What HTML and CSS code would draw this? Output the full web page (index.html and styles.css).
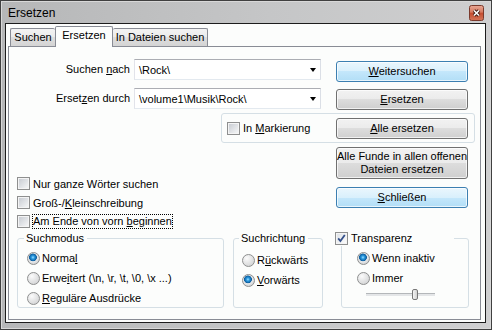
FILE: index.html
```html
<!DOCTYPE html>
<html lang="de">
<head>
    <meta charset="UTF-8">
    <meta name="viewport" content="width=device-width, initial-scale=1.0">
    <title>Ersetzen</title>
    <link rel="stylesheet" href="styles.css">
</head>
<body>
    <div class="window">
        <div class="titlebar">
            <span class="title">Ersetzen</span>
            <span class="close-btn">
                <svg width="15" height="16" viewBox="0 0 15 16">
                    <defs>
                        <linearGradient id="closeGrad" x1="0" y1="0" x2="0" y2="1">
                            <stop offset="0" stop-color="#e9a795"/>
                            <stop offset="0.45" stop-color="#d67a60"/>
                            <stop offset="0.5" stop-color="#c54b2f"/>
                            <stop offset="1" stop-color="#d3775a"/>
                        </linearGradient>
                    </defs>
                    <rect x="0.5" y="0.5" width="14" height="15" rx="2" fill="url(#closeGrad)" stroke="#7a3a2c"/>
                    <path d="M5 5.5l5 5M10 5.5l-5 5" stroke="#3b1a12" stroke-width="3.4"/>
                    <path d="M5 5.5l5 5M10 5.5l-5 5" stroke="#fff" stroke-width="1.6"/>
                </svg>
            </span>
        </div>
        <div class="client">
            <div class="tabs">
                <div class="tab tab-first">Suchen</div>
                <div class="tab active">Ersetzen</div>
                <div class="tab tab-files">In Dateien suchen</div>
            </div>
            <div class="panel">
                <div class="field-row">
                    <label class="field-label">Suchen <u>n</u>ach</label>
                    <div class="combo"><span class="combo-text">\Rock\</span><span class="combo-arrow"></span></div>
                    <button class="btn btn-default btn-first"><u>W</u>eitersuchen</button>
                </div>
                <div class="field-row second">
                    <label class="field-label">Erset<u>z</u>en durch</label>
                    <div class="combo"><span class="combo-text">\volume1\Musik\Rock\</span><span class="combo-arrow"></span></div>
                    <button class="btn btn-second"><u>E</u>rsetzen</button>
                </div>
                <div class="selection-box">
                    <label class="check-item"><span class="check"></span><span>In <u>M</u>arkierung</span></label>
                    <button class="btn"><u>A</u>lle ersetzen</button>
                </div>
                <div class="lower">
                    <div class="options">
                        <label class="check-item"><span class="check"></span><span>Nur <u>g</u>anze Wörter suchen</span></label>
                        <label class="check-item"><span class="check"></span><span>Groß-/<u>K</u>leinschreibung</span></label>
                        <label class="check-item"><span class="check"></span><span class="focus">Am Ende von vorn <u>b</u>eginnen</span></label>
                    </div>
                    <div class="btn-col">
                        <button class="btn btn-tall">Alle Funde in allen offenen<br>Dateien ersetzen</button>
                        <button class="btn btn-default"><u>S</u>chließen</button>
                    </div>
                </div>
                <div class="groups">
                    <fieldset class="group group-mode">
                        <legend>Suchmodus</legend>
                        <label class="radio-item"><span class="radio on"></span><span>Norma<u>l</u></span></label>
                        <label class="radio-item"><span class="radio"></span><span>Erwe<u>i</u>tert (\n, \r, \t, \0, \x ...)</span></label>
                        <label class="radio-item"><span class="radio"></span><span><u>R</u>eguläre Ausdrücke</span></label>
                    </fieldset>
                    <fieldset class="group group-dir">
                        <legend>Suchrichtung</legend>
                        <label class="radio-item"><span class="radio"></span><span>R<u>ü</u>ckwärts</span></label>
                        <label class="radio-item"><span class="radio on"></span><span><u>V</u>orwärts</span></label>
                    </fieldset>
                    <fieldset class="group group-trans">
                        <legend>
                            <span class="check checked">
                                <svg width="9" height="9" viewBox="0 0 9 9"><path d="M1.2 4.4l2.2 2.6 4.4-6" fill="none" stroke="#34508a" stroke-width="1.8"/></svg>
                            </span><span>Transparenz</span>
                        </legend>
                        <label class="radio-item"><span class="radio on"></span><span>Wenn inaktiv</span></label>
                        <label class="radio-item"><span class="radio"></span><span>Immer</span></label>
                        <div class="slider">
                            <span class="track"></span><span class="thumb"></span><span class="track track-end"></span>
                        </div>
                    </fieldset>
                </div>
            </div>
        </div>
    </div>
</body>
</html>
```

FILE: styles.css
```css
* {
    box-sizing: border-box;
}

body {
    margin: 0;
    font-family: "Liberation Sans", Arial, sans-serif;
    font-size: 11px;
    color: #000;
    background-color: #fff;
}

.window {
    width: 492px;
    height: 330px;
    display: flex;
    flex-direction: column;
    border: 1px solid #404040;
    padding: 0 5px 6px 4px;
    background: linear-gradient(to right, #b6b7b8, #c5c6c7 55%, #cfcfd0);
    box-shadow: inset 0 0 0 1px #d8d8d8;
}

.titlebar {
    height: 22px;
    display: flex;
    justify-content: space-between;
    align-items: flex-start;
    padding-left: 3px;
}

.title {
    font-size: 12px;
    margin-top: 5px;
}

.close-btn {
    display: flex;
    margin-top: 4px;
    margin-right: 2px;
}

.client {
    flex: 1;
    display: flex;
    flex-direction: column;
    border: 1px solid #1c1c1c;
    background-color: #fcfdfc;
    padding: 2px 4px 2px 2px;
}

.tabs {
    height: 20px;
    display: flex;
    align-items: flex-end;
    padding-left: 2px;
}

.tab {
    height: 18px;
    line-height: 17px;
    text-align: center;
    border: 1px solid #898c95;
    border-bottom: none;
    border-radius: 2px 2px 0 0;
    background: linear-gradient(#f3f3f3, #ebebeb 50%, #dedede 50%, #d4d4d4);
}

.tab-first {
    width: 45px;
    border-right: none;
}

.tab.active {
    width: 58px;
    height: 21px;
    line-height: 17px;
    margin-bottom: -1px;
    background: #fcfdfc;
    position: relative;
    z-index: 1;
}

.tab-files {
    width: 95px;
    border-left: none;
}

.panel {
    flex: 1;
    border: 1px solid #898c95;
    background-color: #fcfdfc;
    padding-top: 12px;
}

.field-row {
    display: flex;
    height: 21px;
}

.field-row.second {
    margin-top: 8px;
}

.field-label {
    width: 121px;
    line-height: 21px;
    text-align: right;
}

.combo {
    width: 187px;
    height: 21px;
    margin-left: 4px;
    display: flex;
    align-items: center;
    border: 1px solid;
    border-color: #abadb3 #dbdfe6 #e3e9ef #e2e3ea;
    background-color: #fff;
    padding: 0 4px 0 4px;
}

.combo-text {
    flex: 1;
}

.combo-arrow {
    width: 0;
    height: 0;
    border-left: 3.5px solid transparent;
    border-right: 3.5px solid transparent;
    border-top: 4px solid #000;
}

.btn {
    font: inherit;
    color: #000;
    width: 132px;
    height: 21px;
    padding: 0;
    line-height: 13px;
    white-space: nowrap;
    border: 1px solid #707070;
    border-radius: 3px;
    background: linear-gradient(#f2f2f2, #ebebeb 50%, #dddddd 50%, #cfcfcf);
    box-shadow: inset 0 0 0 1px rgba(255, 255, 255, 0.7);
}

.btn-default {
    border-color: #3c7fb1;
    background: linear-gradient(#eaf6fd, #d9f0fc 50%, #c4e7fb 50%, #b2def6);
}

.btn-first {
    margin-left: 15px;
    margin-top: 2px;
}

.btn-second {
    margin-left: 15px;
    margin-top: 1px;
}

.btn-tall {
    height: 32px;
}

.selection-box {
    width: 254px;
    height: 30px;
    margin-top: 4px;
    margin-left: 212px;
    display: flex;
    align-items: center;
    justify-content: space-between;
    border: 1px solid #d5dfe5;
    border-radius: 3px;
    padding: 0 6px 0 5px;
}

.check-item {
    display: flex;
    align-items: center;
    gap: 3px;
    height: 19px;
}

.check {
    width: 13px;
    height: 13px;
    flex: none;
    display: flex;
    padding: 1px;
    border: 1px solid #8e8f8f;
    background: linear-gradient(135deg, #c9cdd3, #f4f5f6) content-box, #f4f4f4;
}

.check.checked {
    background: linear-gradient(135deg, #dfe3e8, #fbfbfb) content-box, #f4f4f4;
}

.lower {
    display: flex;
    margin-top: 4px;
}

.options {
    width: 319px;
    margin-left: 8px;
    margin-top: 27px;
}

.focus {
    line-height: 13px;
    outline: 1px dotted #000;
}

.btn-col {
    display: flex;
    flex-direction: column;
    gap: 8px;
}

.groups {
    display: flex;
    margin-left: 8px;
}

.group {
    margin: 0;
    height: 77px;
    min-width: 0;
    border: 1px solid #d5dfe5;
    border-radius: 3px;
    padding: 2px 0 0 9px;
}

.group legend {
    line-height: 15px;
    padding: 0 3px 0 2px;
    margin-left: -3px;
}

.group-mode {
    width: 207px;
}

.group-dir {
    width: 90px;
    margin-left: 9px;
    padding-left: 8px;
    padding-top: 4px;
}

.group-trans {
    width: 128px;
    margin-left: 18px;
    padding-left: 15px;
}

.group-trans legend {
    display: flex;
    align-items: center;
    gap: 3px;
    width: 119px;
    padding: 0;
    margin-left: -22px;
}

.radio-item {
    display: flex;
    align-items: center;
    gap: 2px;
    height: 20px;
}

.radio {
    width: 13px;
    height: 13px;
    flex: none;
    border-radius: 50%;
    border: 1px solid #8e8f8f;
    background: radial-gradient(circle at 35% 30%, #fbfbfb, #d9dadb 70%, #c6c8ca);
}

.radio.on {
    background: radial-gradient(circle at 45% 40%, #9fe0ff 0, #2a9ae0 1.6px, #0d5c9c 3.6px, #e9eaeb 4.2px, #d7d8d9 70%, #c6c8ca);
}

.slider {
    display: flex;
    align-items: center;
    height: 12px;
    margin-left: 9px;
}

.track {
    width: 46px;
    height: 3px;
    background-color: #e4e6e8;
    border-top: 1px solid #b4b7ba;
}

.track-end {
    width: 17px;
}

.thumb {
    width: 6px;
    height: 11px;
    border: 1px solid #777;
    border-radius: 2px;
    background: linear-gradient(to right, #f4f4f4, #d2d2d2);
}
```
